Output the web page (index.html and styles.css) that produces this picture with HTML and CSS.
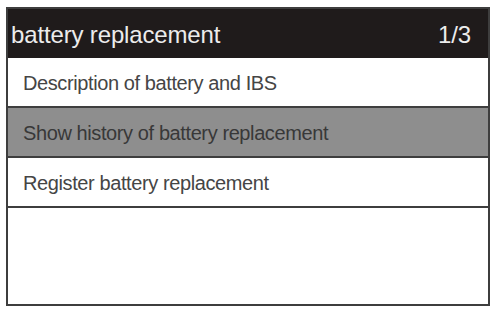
FILE: index.html
```html
<!DOCTYPE html>
<html>
<head>
<meta charset="utf-8">
<link rel="stylesheet" href="styles.css">
</head>
<body>
<div class="screen">
  <div class="header">
    <span class="title">battery replacement</span>
    <span class="page">1/3</span>
  </div>
  <div class="row">Description of battery and IBS</div>
  <div class="row selected">Show history of battery replacement</div>
  <div class="row">Register battery replacement</div>
  <div class="empty"></div>
</div>
</body>
</html>
```
FILE: styles.css
```css
html, body {
  margin: 0;
  padding: 0;
  background: #ffffff;
}
body {
  width: 493px;
  height: 309px;
  overflow: hidden;
  font-family: "Liberation Sans", Arial, sans-serif;
}
.screen {
  box-sizing: border-box;
  margin: 7px 0 0 6px;
  width: 484px;
  height: 299px;
  border: 2px solid #3e3e3e;
  display: flex;
  flex-direction: column;
}
.header {
  height: 49px;
  flex: none;
  background: #1f1b1b;
  color: #ececec;
  display: flex;
  align-items: center;
  justify-content: space-between;
  padding: 2px 17px 0 3px;
  box-sizing: border-box;
  font-size: 24px;
  letter-spacing: -0.15px;
}
.row {
  box-sizing: border-box;
  height: 50px;
  flex: none;
  border-bottom: 2px solid #3e3e3e;
  display: flex;
  align-items: center;
  padding: 2px 0 0 15px;
  font-size: 20px;
  letter-spacing: -0.4px;
  color: #454545;
  background: #ffffff;
}
.row.selected {
  background: #8e8e8e;
  color: #383838;
}
.empty {
  flex: 1;
}
```
